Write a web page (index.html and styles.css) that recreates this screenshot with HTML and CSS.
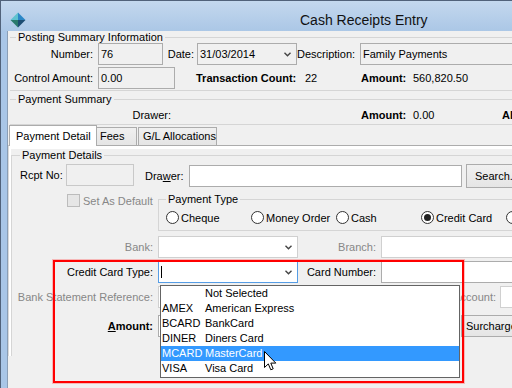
FILE: index.html
```html
<!DOCTYPE html>
<html lang="en">
<head>
    <meta charset="UTF-8">
    <meta name="viewport" content="width=device-width, initial-scale=1.0">
    <title>Cash Receipts Entry</title>
    <link rel="stylesheet" href="styles.css">
</head>
<body>
    <div class="window">
        <div class="titlebar">
            <span class="icon-slot">
                <svg class="app-icon" width="16" height="16" viewBox="0 0 16 16">
                    <polygon points="8,0.5 0.5,8 8,8" fill="#5fc2cf"/>
                    <polygon points="8,0.5 15.5,8 8,8" fill="#2b87c6"/>
                    <polygon points="0.5,8 8,15.5 8,8" fill="#2a7a6c"/>
                    <polygon points="15.5,8 8,15.5 8,8" fill="#1d4d72"/>
                </svg>
            </span>
            <span class="title">Cash Receipts Entry</span>
        </div>
        <div class="frame">
            <div class="client">
                <!-- Posting summary -->
                <fieldset class="group group-top">
                    <legend>Posting Summary Information</legend>
                    <div class="row">
                        <span class="lbl lbl-head">Number:</span>
                        <div class="edit readonly w-number">76</div>
                        <span class="lbl w-date-lbl">Date:</span>
                        <div class="edit readonly combo w-date">31/03/2014
                            <svg class="arrow" width="7" height="5" viewBox="0 0 7 5"><polyline points="0.5,0.8 3.5,3.8 6.5,0.8" fill="none" stroke="#444" stroke-width="1.4"/></svg>
                        </div>
                        <span class="lbl w-desc-lbl">Description:</span>
                        <div class="edit readonly w-desc">Family Payments</div>
                    </div>
                    <div class="row row-second">
                        <span class="lbl lbl-head">Control Amount:</span>
                        <div class="edit readonly w-control">0.00</div>
                        <span class="stat-lbl w-count">Transaction Count:</span>
                        <span class="w-count-val">22</span>
                        <span class="stat-lbl w-amount">Amount:</span>
                        <span>560,820.50</span>
                    </div>
                </fieldset>

                <!-- Payment summary -->
                <fieldset class="group group-top group-summary">
                    <legend>Payment Summary</legend>
                    <div class="row row-summary">
                        <span class="lbl w-sum-drawer">Drawer:</span>
                        <span class="stat-lbl w-sum-amount">Amount:</span>
                        <span class="w-sum-val">0.00</span>
                        <span class="stat-lbl">Allocated:</span>
                    </div>
                </fieldset>

                <div class="tabs">
                    <div class="tab active">Payment Detail</div>
                    <div class="tab tab-fees">Fees</div>
                    <div class="tab tab-gl">G/L Allocations</div>
                </div>
                <div class="tabpage">
                    <div class="page-body">
                        <fieldset class="group group-details">
                            <legend>Payment Details</legend>
                            <div class="row row-rcpt">
                                <span class="lbl-left w-rcpt">Rcpt No:</span>
                                <div class="edit disabled w-rcpt-edit"></div>
                                <span class="lbl-left w-drawer">Dra<u>w</u>er:</span>
                                <div class="edit w-drawer-edit"></div>
                                <div class="button btn-search">Search...</div>
                            </div>
                            <div class="row row-type">
                                <div class="default-check">
                                    <span class="checkbox"></span>
                                    <span class="muted">Set As Default</span>
                                </div>
                                <fieldset class="group group-type">
                                    <legend>Payment Type</legend>
                                    <div class="radios">
                                        <div class="radio"><span class="dot"></span>Cheque</div>
                                        <div class="radio"><span class="dot"></span>Money Order</div>
                                        <div class="radio"><span class="dot"></span>Cash</div>
                                        <div class="radio"><span class="dot checked"></span>Credit Card</div>
                                        <div class="radio"><span class="dot"></span>EFT</div>
                                    </div>
                                </fieldset>
                            </div>
                            <div class="row row-bank">
                                <span class="lbl w-field muted">Bank:</span>
                                <div class="edit combo soft w-combo">
                                    <span></span>
                                    <svg class="arrow" width="7" height="5" viewBox="0 0 7 5"><polyline points="0.5,0.8 3.5,3.8 6.5,0.8" fill="none" stroke="#444" stroke-width="1.4"/></svg>
                                </div>
                                <span class="lbl w-right muted">Branch:</span>
                                <div class="edit soft w-right-edit"></div>
                            </div>
                            <div class="row row-next">
                                <span class="lbl w-field">Credit Card Type:</span>
                                <div class="edit combo focused w-combo">
                                    <span class="caret"></span>
                                    <svg class="arrow" width="7" height="5" viewBox="0 0 7 5"><polyline points="0.5,0.8 3.5,3.8 6.5,0.8" fill="none" stroke="#444" stroke-width="1.4"/></svg>
                                </div>
                                <span class="lbl w-right">Card Number:</span>
                                <div class="edit w-right-edit"></div>
                            </div>
                            <div class="row row-next">
                                <span class="lbl w-field muted">Bank Statement Reference:</span>
                                <div class="edit soft w-combo"></div>
                                <span class="lbl w-account muted">Bank Account:</span>
                                <div class="edit soft w-right-edit"></div>
                            </div>
                            <div class="row row-amount">
                                <span class="lbl w-field stat-lbl"><u>A</u>mount:</span>
                                <div class="edit w-combo"></div>
                                <div class="button btn-surcharge">Surcharge</div>
                            </div>
                        </fieldset>
                    </div>
                </div>
            </div>
        </div>
    </div>

    <!-- open drop-down of the credit card type combo -->
    <div class="dropdown">
        <div class="item"><span class="code"></span><span>Not Selected</span></div>
        <div class="item"><span class="code">AMEX</span><span>American Express</span></div>
        <div class="item"><span class="code">BCARD</span><span>BankCard</span></div>
        <div class="item"><span class="code">DINER</span><span>Diners Card</span></div>
        <div class="item selected"><span class="code">MCARD</span><span>MasterCard</span></div>
        <div class="item"><span class="code">VISA</span><span>Visa Card</span></div>
    </div>

    <div class="highlight"></div>

    <svg class="cursor" width="13" height="20" viewBox="0 0 13 20">
        <path d="M0.5 0.5 L0.5 16.5 L4.3 12.9 L6.8 18.8 L9.2 17.8 L6.8 12.1 L11.8 12.1 Z" fill="#fff" stroke="#000" stroke-width="1" stroke-linejoin="miter"/>
    </svg>
</body>
</html>
```

FILE: styles.css
```css
* {
    box-sizing: border-box;
}
body {
    margin: 0;
    width: 512px;
    height: 388px;
    overflow: hidden;
    position: relative;
    font-family: "Liberation Sans", Arial, sans-serif;
    font-size: 11px;
    color: #000;
    background: #f0f0f0;
}

/* window chrome */
.window {
    width: 760px;
    height: 388px;
    border-top: 1px solid #51627a;
    border-left: 1px solid #51627a;
    background: #a9c6e7;
}
.titlebar {
    height: 30px;
    display: flex;
    align-items: center;
    padding-top: 8px;
    background: linear-gradient(#c4d8ee, #abc7e6);
}
.icon-slot {
    display: flex;
    align-items: center;
    height: 22px;
    margin-left: 9px;
}
.app-icon {
    display: block;
}
.title {
    margin-left: 274px;
    font-size: 14px;
    line-height: 16px;
    color: #111;
}
.frame {
    display: flex;
    height: 357px;
    padding-left: 6px;
}
.client {
    flex: 1;
    background: #f0f0f0;
    border-left: 1px solid #8a9eb6;
}

/* group boxes */
.group {
    margin: 0;
    padding: 0;
    min-width: 0;
    border: 1px solid #d5d5d5;
}
.group legend {
    padding: 0 2px;
    height: 12px;
    line-height: 12px;
}
.group-top {
    margin-left: 2px;
    border-left: none;
    border-right: none;
    padding-bottom: 1px;
}
.group-top legend {
    margin-left: 6px;
}
.group-summary {
    margin-top: 2px;
    padding-bottom: 0;
}

/* rows */
.row {
    display: flex;
    align-items: center;
    height: 22px;
}
.row > * {
    flex-shrink: 0;
}
.row-second {
    margin-top: 2px;
}
.lbl {
    text-align: right;
    white-space: nowrap;
}
.lbl-head {
    width: 83px;
}
.stat-lbl {
    font-weight: bold;
}
.muted {
    color: #878787;
}
.edit {
    height: 22px;
    line-height: 20px;
    padding: 0 2px;
    border: 1px solid #acacac;
    background: #fff;
    white-space: nowrap;
}
.edit.readonly {
    background: #f0f0f0;
}
.edit.disabled {
    background: #f0f0f0;
    border-color: #c9c9c9;
}
.edit.soft {
    border-color: #d0d0d0;
}
.edit.focused {
    border-color: #569de5;
}
.combo {
    display: flex;
    align-items: center;
    justify-content: space-between;
    padding-right: 5px;
}
.arrow {
    display: block;
}
.caret {
    display: block;
    width: 1px;
    height: 12px;
    background: #000;
}

.w-number {
    margin-left: 5px;
    width: 65px;
}
.w-date-lbl {
    width: 31px;
}
.w-date {
    margin-left: 3px;
    width: 100px;
}
.w-desc-lbl {
    width: 58px;
}
.w-desc {
    margin-left: 5px;
    width: 400px;
}
.w-control {
    margin-left: 5px;
    width: 77px;
}
.w-count {
    margin-left: 21px;
    width: 109px;
}
.w-count-val {
    width: 56px;
}
.w-amount {
    width: 52px;
}

.row-summary {
    height: 19px;
}
.w-sum-drawer {
    width: 161px;
}
.w-sum-amount {
    margin-left: 190px;
    width: 52px;
}
.w-sum-val {
    width: 89px;
}

/* tabs */
.tabs {
    display: flex;
    align-items: flex-end;
    height: 20px;
    margin-left: 1px;
}
.tab {
    height: 18px;
    line-height: 17px;
    padding-left: 6px;
    border: 1px solid #acacac;
    border-bottom: none;
    background: linear-gradient(#f0f0f0, #e5e5e5);
    white-space: nowrap;
}
.tab.active {
    position: relative;
    z-index: 1;
    height: 21px;
    line-height: 20px;
    margin-bottom: -1px;
    width: 88px;
    background: #fff;
}
.tab-fees {
    width: 40px;
    padding-left: 3px;
    border-left: none;
}
.tab-gl {
    width: 79px;
    margin-left: 1px;
    padding-left: 4px;
}
.tabpage {
    height: 211px;
    border-top: 1px solid #acacac;
    border-left: 1px solid #d9d9d9;
    background: #fff;
    padding: 3px 0 0 2px;
}
.page-body {
    height: 100%;
    background: #f0f0f0;
}
.group-details {
    border-right: none;
    border-bottom: none;
    height: 100%;
}
.group-details legend {
    margin-left: 8px;
}

/* payment detail rows */
.row-rcpt {
    margin-top: 3px;
    height: 24px;
    align-items: flex-start;
}
.lbl-left {
    line-height: 22px;
}
.w-rcpt {
    width: 54px;
    padding-left: 8px;
}
.w-rcpt-edit {
    width: 68px;
}
.w-drawer {
    margin-left: 11px;
    width: 44px;
    margin-top: 1px;
}
.w-drawer-edit {
    margin-top: 1px;
    width: 273px;
}
.button {
    height: 24px;
    line-height: 22px;
    border: 1px solid #acacac;
    background: linear-gradient(#f0f0f0, #e5e5e5);
    white-space: nowrap;
}
.btn-search {
    margin-left: 4px;
    width: 70px;
    padding-left: 8px;
}

.row-type {
    margin-top: 5px;
    height: auto;
    align-items: flex-start;
}
.default-check {
    width: 146px;
    padding-left: 55px;
    display: flex;
    align-items: center;
    height: 15px;
}
.checkbox {
    width: 13px;
    height: 13px;
    margin-right: 3px;
    border: 1px solid #bcbcbc;
    background: #e6e6e6;
}
.group-type {
    flex: 1;
    border-right: none;
}
.group-type legend {
    margin-left: 7px;
}
.radios {
    display: grid;
    grid-template-columns: repeat(5, 85px);
    height: 25px;
    padding-left: 7px;
    align-items: center;
}
.radio {
    display: flex;
    align-items: center;
    white-space: nowrap;
}
.dot {
    width: 13px;
    height: 13px;
    margin-right: 2px;
    border: 1px solid #333;
    border-radius: 50%;
    background: #fff;
    display: flex;
    align-items: center;
    justify-content: center;
}
.dot.checked::after {
    content: "";
    width: 7px;
    height: 7px;
    border-radius: 50%;
    background: #222;
}

.row-bank {
    margin-top: 5px;
}
.row-next {
    margin-top: 3px;
}
.row-amount {
    margin-top: 7px;
}
.w-field {
    width: 141px;
    margin-right: 5px;
}
.w-combo {
    width: 140px;
}
.w-right {
    width: 78px;
    margin-right: 5px;
}
.w-right-edit {
    width: 160px;
}
.w-account {
    width: 198px;
    margin-right: 4px;
}
.btn-surcharge {
    margin-left: 163px;
    height: 22px;
    line-height: 20px;
    width: 80px;
    padding-left: 4px;
}

/* overlays */
.dropdown {
    position: absolute;
    left: 160px;
    top: 285px;
    width: 300px;
    height: 93px;
    border: 1px solid #646464;
    background: #fff;
}
.item {
    display: flex;
    height: 15px;
    line-height: 15px;
    white-space: nowrap;
}
.item .code {
    width: 44px;
    padding-left: 1px;
}
.item.selected {
    background: #3399ff;
    color: #fff;
}
.highlight {
    position: absolute;
    left: 53px;
    top: 260px;
    width: 411px;
    height: 123px;
    border: 2px solid #ff0000;
    box-shadow: 0 0 0 1px rgba(255, 80, 80, 0.35);
}
.cursor {
    position: absolute;
    left: 264px;
    top: 351px;
}
```
